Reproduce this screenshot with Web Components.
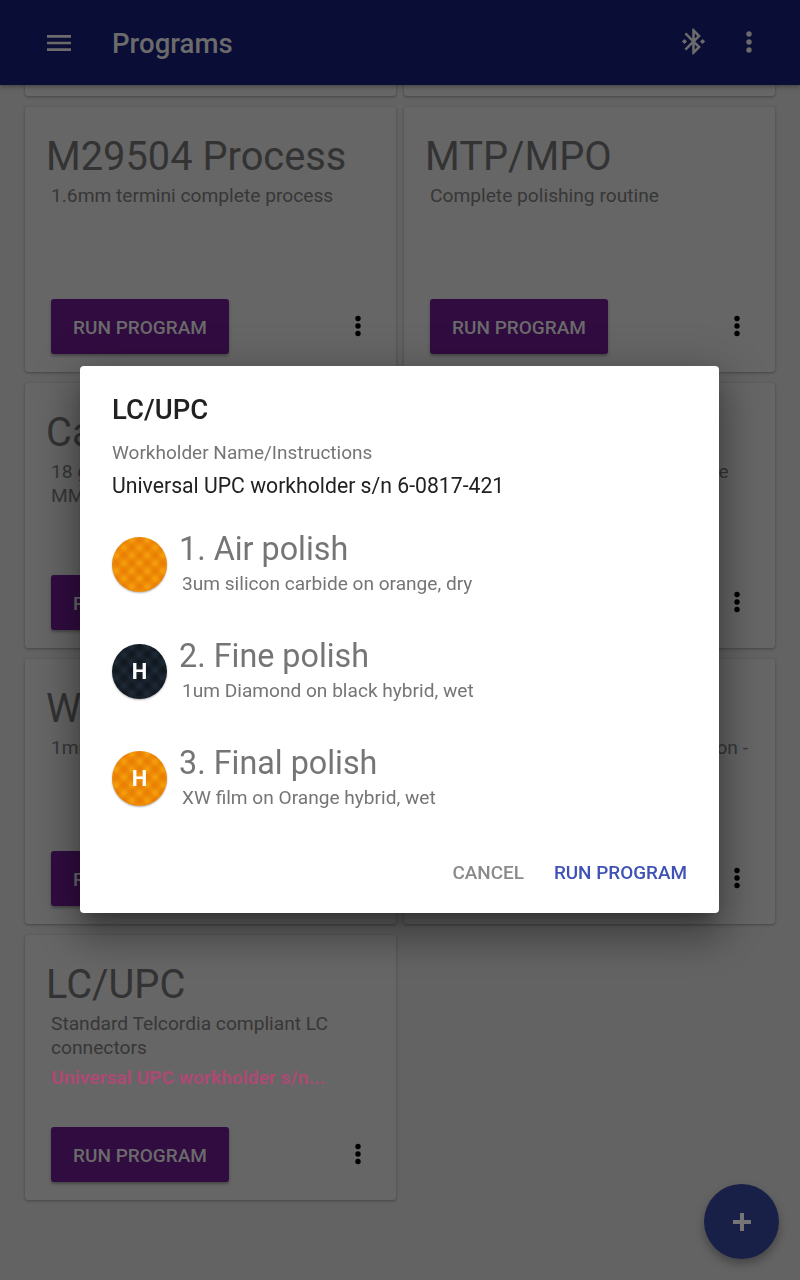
<!DOCTYPE html>
<html>
<head>
<meta charset="utf-8">
<title>Programs</title>
<style>
  html, body { margin: 0; height: 100%; overflow: hidden; background: #636363; font-family: Roboto, "Liberation Sans", sans-serif; }
  program-grid { margin-top: -254px; }
</style>
</head>
<body>
<app-bar title="Programs"></app-bar>
<program-grid>
  <program-card></program-card>
  <program-card></program-card>
  <program-card name="M29504 Process">1.6mm termini complete process</program-card>
  <program-card name="MTP/MPO">Complete polishing routine</program-card>
  <program-card name="Cable assembly">18 gauge fiber termini<br>MM connectors</program-card>
  <program-card name="SC/APC">Angled connectors for single-mode use</program-card>
  <program-card name="Workholder test">1mm ferrule process</program-card>
  <program-card name="ST/UPC">Standard: ferrule polish &amp; inspection -</program-card>
  <program-card name="LC/UPC" note="Universal UPC workholder s/n...">Standard Telcordia compliant LC connectors</program-card>
</program-grid>
<add-fab></add-fab>
<run-dialog heading="LC/UPC" label="Workholder Name/Instructions" value="Universal UPC workholder s/n 6-0817-421">
  <polish-step name="1. Air polish" detail="3um silicon carbide on orange, dry" pad="orange"></polish-step>
  <polish-step name="2. Fine polish" detail="1um Diamond on black hybrid, wet" pad="black" mark="H"></polish-step>
  <polish-step name="3. Final polish" detail="XW film on Orange hybrid, wet" pad="orange" mark="H"></polish-step>
</run-dialog>

<script>
(function() {
  class AppBar extends HTMLElement {
    constructor() {
      super()
      const shadow = this.attachShadow({ mode: 'open' })
      shadow.innerHTML = `
        <style>
          :host {
            display: flex;
            align-items: center;
            position: relative;
            z-index: 2;
            height: 85px;
            background: #0a0d35;
            color: #6b6b6b;
            box-shadow: 0 2px 4px rgba(0,0,0,.3);
          }
          svg { display: block; fill: currentColor; }
          .menu { margin-left: 43px; }
          h1 {
            flex: 1;
            margin: 2px 0 0 37px;
            font: 500 27.6px/32px Roboto, sans-serif;
          }
          .bt { margin-right: 36px; margin-top: -2px; }
          .more { margin-right: 47px; margin-top: -1px; }
        </style>
        <svg class="menu" width="32" height="32" viewBox="0 0 24 24"><path d="M3 18h18v-2H3v2zm0-5h18v-2H3v2zm0-7v2h18V6H3z"/></svg>
        <h1>${this.getAttribute('title')}</h1>
        <svg class="bt" width="31" height="31" viewBox="0 0 24 24"><path d="M7 12l-2-2-2 2 2 2 2-2zm10.71-4.29L12 2h-1v7.59L6.41 5 5 6.41 10.59 12 5 17.59 6.41 19 11 14.41V22h1l5.71-5.71-4.3-4.29 4.3-4.29zM13 5.83l1.88 1.88L13 9.59V5.83zm1.88 10.46L13 18.17v-3.76l1.88 1.88zM19 10l-2 2 2 2 2-2-2-2z"/></svg>
        <svg class="more" width="8" height="24" viewBox="0 0 8 24"><circle cx="4" cy="4" r="2.7"/><circle cx="4" cy="12" r="2.7"/><circle cx="4" cy="20" r="2.7"/></svg>
      `
    }
  }

  class ProgramGrid extends HTMLElement {
    constructor() {
      super()
      const shadow = this.attachShadow({ mode: 'open' })
      shadow.innerHTML = `
        <style>
          :host {
            display: grid;
            grid-template-columns: 371px 371px;
            column-gap: 8px;
            row-gap: 11px;
            padding: 0 25px;
            box-sizing: border-box;
            width: 800px;
          }
        </style>
        <slot></slot>
      `
    }
  }

  class ProgramCard extends HTMLElement {
    constructor() {
      super()
      const shadow = this.attachShadow({ mode: 'open' })
      const note = this.getAttribute('note')
      shadow.innerHTML = `
        <style>
          :host {
            display: flex;
            flex-direction: column;
            box-sizing: border-box;
            height: 265px;
            padding: 28px 26px 18px;
            background: #666;
            border-radius: 3px;
            box-shadow: 0 1px 3px rgba(0,0,0,.3);
            color: #333;
          }
          h2 {
            margin: 0 0 0 -5px;
            min-height: 49px;
            font: 400 39.8px/44px Roboto, sans-serif;
            white-space: nowrap;
          }
          .sub {
            margin-right: -4px;
            font: 400 19.2px/23.5px Roboto, sans-serif;
            color: #373737;
          }
          .note {
            margin-top: 7px;
            font: 700 19.2px/23px Roboto, sans-serif;
            color: #ab4a72;
            white-space: nowrap;
          }
          .foot {
            display: flex;
            align-items: center;
            justify-content: space-between;
            margin-top: auto;
          }
          .run {
            width: 178px;
            height: 55px;
            border: 0;
            padding: 1px 0 0;
            border-radius: 3px;
            background: #310c41;
            color: #6b6b6b;
            font: 500 19px Roboto, sans-serif;
            box-shadow: 0 2px 3px rgba(0,0,0,.3);
          }
          svg { display: block; margin-top: -1px; }
        </style>
        <h2>${this.getAttribute('name') || ''}</h2>
        <div class="sub"><slot></slot></div>
        ${note ? `<div class="note">${note}</div>` : ''}
        <div class="foot">
          <button class="run">RUN PROGRAM</button>
          <svg width="24" height="30" viewBox="0 0 24 30"><circle cx="12" cy="7.5" r="2.7"/><circle cx="12" cy="15" r="2.7"/><circle cx="12" cy="22.5" r="2.7"/></svg>
        </div>
      `
    }
  }

  class AddFab extends HTMLElement {
    constructor() {
      super()
      const shadow = this.attachShadow({ mode: 'open' })
      shadow.innerHTML = `
        <style>
          :host {
            position: fixed;
            left: 704px;
            top: 1184px;
            width: 75px;
            height: 75px;
            display: flex;
            align-items: center;
            justify-content: center;
            border-radius: 50%;
            background: #192048;
            box-shadow: 0 5px 10px rgba(0,0,0,.3);
          }
          svg { display: block; fill: #757575; }
        </style>
        <svg width="18" height="18" viewBox="0 0 18 18"><path d="M7 0h4v7h7v4h-7v7H7v-7H0V7h7z"/></svg>
      `
    }
  }

  class RunDialog extends HTMLElement {
    constructor() {
      super()
      const shadow = this.attachShadow({ mode: 'open' })
      shadow.innerHTML = `
        <style>
          :host {
            position: fixed;
            left: 80px;
            top: 366px;
            z-index: 3;
            display: flex;
            flex-direction: column;
            box-sizing: border-box;
            width: 639px;
            height: 547px;
            padding: 28px 32px 0;
            background: #fff;
            border-radius: 4px;
            box-shadow: 0 11px 15px -7px rgba(0,0,0,.3), 0 24px 38px 3px rgba(0,0,0,.22), 0 9px 46px 8px rgba(0,0,0,.2);
          }
          h3 {
            margin: 0;
            font: 500 27.5px/32px Roboto, sans-serif;
            color: #212121;
          }
          .label {
            margin-top: 15px;
            font: 400 19px/24px Roboto, sans-serif;
            color: #757575;
          }
          .value {
            margin-top: 9px;
            font: 400 21.2px/24px Roboto, sans-serif;
            color: #212121;
          }
          .steps {
            display: flex;
            flex-direction: column;
            gap: 52px;
            margin-top: 39px;
          }
          .actions {
            display: flex;
            justify-content: flex-end;
            gap: 30px;
            margin-top: auto;
            margin-bottom: 28px;
            font: 500 18.9px/24px Roboto, sans-serif;
          }
          .cancel { color: #8a8a8a; }
          .ok { color: #3f51b5; }
        </style>
        <h3>${this.getAttribute('heading')}</h3>
        <div class="label">${this.getAttribute('label')}</div>
        <div class="value">${this.getAttribute('value')}</div>
        <div class="steps"><slot></slot></div>
        <div class="actions">
          <span class="cancel">CANCEL</span>
          <span class="ok">RUN PROGRAM</span>
        </div>
      `
    }
  }

  class PolishStep extends HTMLElement {
    constructor() {
      super()
      const shadow = this.attachShadow({ mode: 'open' })
      const pad = this.getAttribute('pad')
      shadow.innerHTML = `
        <style>
          :host {
            display: flex;
            align-items: center;
            height: 55px;
          }
          .pad {
            flex: none;
            width: 55px;
            height: 55px;
            margin-right: 12px;
            display: flex;
            align-items: center;
            justify-content: center;
            border-radius: 50%;
            box-shadow: 0 1px 2px rgba(0,0,0,.3);
            color: #fff;
            font: 700 22px Roboto, sans-serif;
          }
          .orange {
            background-color: #f49c0a;
            background-image:
              repeating-linear-gradient(45deg, rgba(228,110,0,.38) 0 3px, rgba(228,110,0,0) 5.5px 8px, rgba(228,110,0,.38) 11px),
              repeating-linear-gradient(-45deg, rgba(228,110,0,.38) 0 3px, rgba(228,110,0,0) 5.5px 8px, rgba(228,110,0,.38) 11px);
          }
          .black {
            background-color: #1d2835;
            background-image:
              repeating-linear-gradient(45deg, rgba(0,0,0,.22) 0 3px, rgba(0,0,0,0) 5.5px 8px, rgba(0,0,0,.22) 11px),
              repeating-linear-gradient(-45deg, rgba(0,0,0,.22) 0 3px, rgba(0,0,0,0) 5.5px 8px, rgba(0,0,0,.22) 11px);
          }
          .text { margin-top: -2px; }
          .name {
            font: 400 32.3px/36px Roboto, sans-serif;
            color: #757575;
          }
          .detail {
            margin: 5px 0 0 3px;
            font: 400 19.1px/24px Roboto, sans-serif;
            color: #757575;
          }
        </style>
        <div class="pad ${pad}">${this.getAttribute('mark') || ''}</div>
        <div class="text">
          <div class="name">${this.getAttribute('name')}</div>
          <div class="detail">${this.getAttribute('detail')}</div>
        </div>
      `
    }
  }

  customElements.define('app-bar', AppBar)
  customElements.define('program-grid', ProgramGrid)
  customElements.define('program-card', ProgramCard)
  customElements.define('add-fab', AddFab)
  customElements.define('run-dialog', RunDialog)
  customElements.define('polish-step', PolishStep)
})()
</script>
</body>
</html>
